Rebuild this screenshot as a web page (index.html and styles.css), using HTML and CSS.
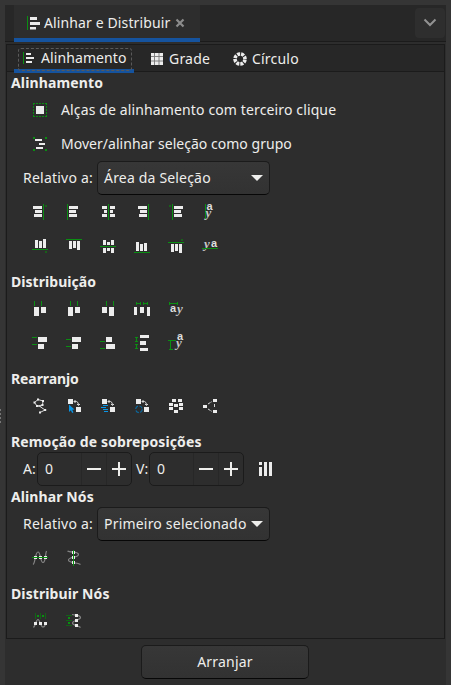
FILE: index.html
```html
<!DOCTYPE html>
<html lang="pt-BR">
<head>
<meta charset="utf-8">
<title>Alinhar e Distribuir</title>
<link rel="stylesheet" href="styles.css">
</head>
<body>
<div class="dock">
  <div class="grip"><i></i><i></i><i></i><i></i></div>
  <header class="dock-tabs">
    <div class="dock-tab">
      <svg class="tab-icon" width="14" height="14" viewBox="0 0 14 14"><path class="g" d="M0 0h1v14H0z"/><path class="w" d="M3 1h7v3H3zM3 6h10v3H3zM3 11h6v2.500H3z"/></svg>
      <span class="t-title">Alinhar e Distribuir</span>
      <svg class="close" width="10" height="10" viewBox="0 0 10 10"><path d="M1.500 1.500l7 7M8.500 1.500l-7 7"/></svg>
    </div>
    <button class="menu"><svg width="14" height="10" viewBox="0 0 14 10"><path d="M1.500 1.500L7 7l5.500-5.500"/></svg></button>
  </header>
  <main class="frame">
    <nav class="tabs">
      <div class="tab active">
        <svg width="12" height="12" viewBox="0 0 12 12"><path class="g" d="M0 0h1v12H0z"/><path class="w" d="M3 1h5v2H3zM3 5h8v2H3zM3 9h6v2H3z"/></svg>
        <span class="t-al">Alinhamento</span>
      </div>
      <div class="tab grade">
        <svg width="12" height="12" viewBox="0 0 12 12"><path class="w" d="M0 0h12v12H0z"/><path d="M3.500 0v12M8 0v12M0 3.500h12M0 8h12" stroke="#777" stroke-width=".9"/></svg>
        <span class="t-gr">Grade</span>
      </div>
      <div class="tab circ">
        <svg width="14" height="14" viewBox="0 0 14 14"><circle cx="7" cy="7" r="5" fill="none" stroke="#ececec" stroke-width="3.600" stroke-dasharray="2.930 1" stroke-dashoffset="-.5"/></svg>
        <span class="t-ci">Círculo</span>
      </div>
    </nav>
    <section>
      <h2 class="h-al">Alinhamento</h2>
      <div class="check"><svg width="20" height="20"><path class="w" d="M6 6h8v8H6z"/><path d="M3 3.500h14M3 16.500h14M3.500 3v14M16.500 3v14" class="gl" stroke-dasharray="2 1"/></svg><span class="t-c1">Alças de alinhamento com terceiro clique</span></div>
      <div class="check second"><svg width="20" height="20"><path class="w" d="M5 5h7v2H5zM9 9h6v2H9zM6 13h7v2H6z"/><path class="g" d="M3 3h2v2H3zM15 3h2v2h-2zM3 15h2v2H3zM15 15h2v2h-2z"/></svg><span class="t-c2">Mover/alinhar seleção como grupo</span></div>
      <div class="field"><label class="t-rel">Relativo a:</label><div class="combo"><span class="t-area">Área da Seleção</span><b></b></div></div>
      <div class="icons">
        <svg><path class="w" d="M3 4h9v3H3zM5 8h7v3H5zM4 12h8v3H4z"/><path class="g" d="M13 2h1v16h-1z"/><path class="d" d="M15 3h2v2h-2z"/></svg>
        <svg><path class="g" d="M3 2h1v16H3z"/><path class="w" d="M5 4h9v3H5zM5 8h7v3H5zM5 12h8v3H5z"/></svg>
        <svg><path class="w" d="M4 4h5v3H4zM12 4h5v3h-5zM6 8h3v3H6zM12 8h3v3h-3zM4 12h5v3H4zM12 12h5v3h-5z"/><path class="g" d="M10 2h1v16h-1z"/></svg>
        <svg><path class="w" d="M6 4h9v3H6zM8 8h7v3H8zM7 12h8v3H7z"/><path class="g" d="M16 2h1v16h-1z"/></svg>
        <svg><path class="d" d="M3 3h2v2H3z"/><path class="g" d="M6 2h1v16H6z"/><path class="w" d="M8 4h9v3H8zM8 8h7v3H8zM8 12h8v3H8z"/></svg>
        <svg><path class="g" d="M5 2h1v16H5z"/><text x="6.500" y="8" class="ga">a</text><text x="5.500" y="15" class="gy">y</text></svg>
      </div>
      <div class="icons">
        <svg><path class="w" d="M5 4h3v8H5zM9 5h3v7H9zM13 3h3v9h-3z"/><path class="g" d="M2 13h16v1H2z"/><path class="d" d="M15 15h2v2h-2z"/></svg>
        <svg><path class="g" d="M2 3h16v1H2z"/><path class="w" d="M5 5h3v8H5zM9 5h3v7H9zM13 5h3v9h-3z"/></svg>
        <svg><path class="w" d="M5 4h3v5H5zM9 6h3v3H9zM13 4h3v5h-3zM5 12h3v5H5zM9 12h3v3H9zM13 12h3v5h-3z"/><path class="g" d="M2 10h16v1H2z"/></svg>
        <svg><path class="w" d="M4 6h3v9H4zM8 8h3v7H8zM12 7h3v8h-3z"/><path class="g" d="M2 16h16v1H2z"/></svg>
        <svg><path class="d" d="M15 3h2v2h-2z"/><path class="g" d="M2 6h16v1H2z"/><path class="w" d="M5 8h3v8H5zM9 8h3v7H9zM13 8h3v9h-3z"/></svg>
        <svg><text x="4" y="11.500" class="gy">y</text><text x="11" y="11" class="ga">a</text><path class="g" d="M2 12h16v1H2z"/></svg>
      </div>
      <h2 class="gap h-di">Distribuição</h2>
      <div class="icons">
        <svg><path class="g" d="M4 1h1v5H4zM11 1h1v5h-1z"/><path class="w" d="M4 7h5v9H4zM11 7h5v6h-5z"/></svg>
        <svg><path class="g" d="M6 1h1v5H6zM13 1h1v5h-1z"/><path class="w" d="M4 7h5v9H4zM11 7h5v6h-5z"/></svg>
        <svg><path class="g" d="M8 1h1v5H8zM15 1h1v5h-1z"/><path class="w" d="M4 7h5v6H4zM11 7h5v9h-5z"/></svg>
        <svg><path class="gl" d="M4.500 2v3M4 3.500h5M8.500 2v3M11.500 2v3M11 3.500h5M15.500 2v3"/><path class="w" d="M2 7h3v8H2zM8 7h4v6H8zM15 7h3v9h-3z"/></svg>
        <svg><path class="gl" d="M3.500 2v3M3 3.500h9M11.500 2v3"/><text x="4" y="12" class="ga">a</text><text x="11" y="13" class="gy">y</text></svg>
      </div>
      <div class="icons tight">
        <svg><path class="g" d="M2 4h5v1H2zM2 11h5v1H2z"/><path class="w" d="M8 4h9v5H8zM8 11h6v5H8z"/></svg>
        <svg><path class="g" d="M2 6h5v1H2zM2 13h5v1H2z"/><path class="w" d="M8 4h9v5H8zM8 11h6v5H8z"/></svg>
        <svg><path class="g" d="M2 8h5v1H2zM2 15h5v1H2z"/><path class="w" d="M8 4h6v5H8zM8 11h9v5H8z"/></svg>
        <svg><path class="gl" d="M3 4.500h3M4.500 4v5M3 8.500h3M3 11.500h3M4.500 11v5M3 15.500h3"/><path class="w" d="M8 2h9v3H8zM8 8h6v4H8zM8 15h8v3H8z"/></svg>
        <svg><path class="gl" d="M2 7.500h8M4.500 7v9M3 16.500h4"/><text x="11" y="7" class="ga">a</text><text x="10" y="14" class="gy">y</text></svg>
      </div>
      <h2 class="gap h-re">Rearranjo</h2>
      <div class="icons tight">
        <svg><path class="wl" d="M4.500 6.500L8 3.500L13 5L12.500 9L7 10Z M7 10L10 10.500M12.500 9L10 10.500L15 14L10 16.500"/><path class="w" d="M3.500 5.500h2v2h-2zM7 2.500h2v2H7zM12 4h2v2h-2zM11.500 8h2v2h-2zM6 9h2v2H6zM14 13h2.200v2H14zM9 15.500h2v2H9z"/></svg>
        <svg><path class="w" d="M4 3h5v5H4zM12 11h5v5h-5z"/><path class="wl" d="M10 5.500h2.500q2 .5 2 3.500M11.500 4L10 5.500l1.500 1.500M13 8l1.500 1.500L16 8"/><path class="b" d="M5 8.500l5.500 5-2.300.2 1.300 2.600-1.400.6-1.200-2.600L5 16z"/></svg>
        <svg><path class="w" d="M4 3h5v5H4zM12 11h5v5h-5z"/><path class="wl" d="M10 5.500h2.500q2 .5 2 3.500M11.500 4L10 5.500l1.500 1.500M13 8l1.500 1.500L16 8"/><path class="b" d="M5 9h5v1H5zM3 11h5v1H3zM5 13h5v1H5zM6 15h4v1H6z"/></svg>
        <svg><path class="w" d="M4 3h5v5H4zM12 11h5v5h-5z"/><path class="wl" d="M10 5.500h2.500q2 .5 2 3.500M11.500 4L10 5.500l1.500 1.500M13 8l1.500 1.500L16 8"/><circle cx="7" cy="13.300" r="3.300" fill="none" stroke="#0a6ba3" stroke-width="1.200" stroke-dasharray="3.700 1.500"/></svg>
        <svg><path class="w" d="M6 3h4v3H6zM12 3h4v3h-4zM3 7h4v3H3zM8 8h4v3H8zM13 7h4v3h-4zM3 11h4v3H3zM13 11h4v3h-4zM8 14h4v3H8z"/></svg>
        <svg><path class="w" d="M3 9h4v3H3zM13 3h4v3h-4zM13 14h4v3h-4z"/><path class="wl" d="M8 8l4-2.500M8 13l4 2.500M14.500 8v4" stroke-dasharray="3 1"/></svg>
      </div>
      <h2 class="gap h-rm">Remoção de sobreposições</h2>
      <div class="field spins">
        <label class="t-a">A:</label><div class="spin"><span>0</span><i class="minus"></i><i class="plus"></i></div>
        <label class="t-v">V:</label><div class="spin"><span>0</span><i class="minus"></i><i class="plus"></i></div>
        <svg class="ill" width="14" height="14"><path class="w" d="M0 0h3v3H0zM0 5h3v9H0zM5 0h3v14H5zM10 0h3v14h-3z"/></svg>
      </div>
      <h2 class="h-an">Alinhar Nós</h2>
      <div class="field nodes"><label class="t-rel">Relativo a:</label><div class="combo"><span class="t-prim">Primeiro selecionado</span><b></b></div></div>
      <div class="icons">
        <svg><path class="s" d="M3 16.500C5.500 15 5 4 8 4S10 14.500 13 14.500S15 6 16.500 3"/><path class="w" d="M4 8h3v3H4zM9 8h3v3H9zM14 8h3v3h-3z"/><path class="g" d="M2 9h16v1H2z"/></svg>
        <svg><path class="s" d="M3.500 3C6 5 14.500 3 14.500 6.500S4.500 8.500 4.500 12S13 14 16.500 16.500"/><path class="w" d="M8 3h3v3H8zM8 8h3v3H8zM8 13h3v3H8z"/><path class="g" d="M9 2h1v16H9z"/></svg>
      </div>
      <h2 class="gap h-dn">Distribuir Nós</h2>
      <div class="icons tight">
        <svg><path class="dl" d="M5.500 2v6M10.500 2v6M15.500 2v6"/><path class="g" d="M7 4h2v2H7zM12 4h2v2h-2z"/><path class="s" d="M3.500 16.500C6 14 6 8.500 8 8.500S10.500 16 13 16S15 13 16 11"/><path class="w" d="M4 11h3v3H4zM9 11h3v3H9zM14 11h3v3h-3z"/></svg>
        <svg><path class="dl" d="M2 4.500h6M2 9.500h6M2 14.500h6"/><path class="g" d="M4 6h2v2H4zM4 11h2v2H4z"/><path class="s" d="M8 3.500C11 4.500 16.500 3.500 16.500 6.500S8.500 9 8.500 12S14 14 16.500 16.500"/><path class="w" d="M11 3h3v3h-3zM11 8h3v3h-3zM11 13h3v3h-3z"/></svg>
      </div>
    </section>
  </main>
  <footer><button class="apply"><span class="t-ar">Arranjar</span></button></footer>
</div>
</body>
</html>
```
FILE: styles.css
```css
* { box-sizing: border-box; }
body { margin: 0; height: 685px; overflow: hidden; background: #353535; color: #eeeeec; font: 14px/20px "Noto Sans", "Open Sans", sans-serif; }
svg { display: block; flex: none; overflow: visible; }
span, label, h2 { white-space: nowrap; }
button { font: inherit; color: inherit; padding: 0; }
.w { fill: #ececec; }
.g { fill: #0a8f12; }
.d { fill: #176219; }
.b { fill: #0a96e6; }
.gl, .wl, .s, .dl { fill: none; stroke: #0a8f12; stroke-width: 1; }
.wl { stroke: #d8d8d8; }
.s { stroke: #858585; stroke-width: 1.2; }
.dl { stroke: #126316; }
.ga { font: bold 11px/1 "Liberation Sans", sans-serif; fill: #dedede; }
.gy { font: italic bold 13px/1 "Liberation Serif", serif; fill: #c8c8c8; }

.dock { position: relative; margin: 5px 5px 0; height: 680px; background: #2d2d2d; display: flex; flex-direction: column; }
.grip { position: absolute; left: -6px; top: 404px; display: grid; gap: 2px; }
.grip i { width: 2px; height: 2px; background: #777; }
.dock-tabs { height: 37px; background: #272727; border-bottom: 1px solid #1b1b1b; padding-left: 9px; display: flex; justify-content: space-between; }
.dock-tab { width: 186px; height: 37px; background: #2d2d2d; border-bottom: 4px solid #15539e; display: flex; align-items: center; padding: 2px 0 0 13px; }
.dock-tab .t-title { margin-left: 3px; width: 127px; letter-spacing: .12px; }
.close { margin-left: 4px; }
.close path { fill: none; stroke: #8c8c8c; stroke-width: 2.2; }
.menu { width: 30px; height: 30px; margin: 3px 1px 0 0; border: 0; border-radius: 4px; background: #2e2e2e; display: grid; place-items: center; }
.menu path { fill: none; stroke: #929292; stroke-width: 2; }
.frame { margin: 2px 1px 0 1px; height: 595px; border: 1px solid #1b1b1b; }
.tabs { height: 27px; background: #272727; border-bottom: 1px solid #1b1b1b; display: flex; padding-left: 7px; }
.tab { height: 26px; display: flex; align-items: center; padding-top: 1px; }
.tab.active { position: relative; width: 120px; height: 28px; border-bottom: 4px solid #15539e; padding: 2px 0 0 9px; }
.tab.active::before { content: ""; position: absolute; left: 4px; top: 3px; width: 112px; height: 21px; border: 1px dashed #5a5a5a; border-radius: 3px; }
.tab.active span { margin-left: 6px; letter-spacing: .1px; }
.tab.grade { margin-left: 17px; width: 82px; }
.tab.grade span { margin-left: 6px; letter-spacing: .2px; }
.tab.circ span { margin-left: 5px; letter-spacing: .2px; }
h2 { margin: 0; padding-left: 4px; height: 22px; font-size: 14px; line-height: 22px; font-weight: 700; }
h2.gap { margin-top: 8px; }
.h-al { letter-spacing: .15px; }
.h-di { letter-spacing: .05px; }
.h-re { letter-spacing: -.1px; }
.h-rm { letter-spacing: .11px; }
.h-an, .h-dn { letter-spacing: .1px; }
.check { height: 32px; padding-left: 23px; display: flex; align-items: center; }
.check.second { margin-top: 2px; }
.check span { margin-left: 11px; }
.t-c1 { letter-spacing: .13px; }
.t-c2 { letter-spacing: .03px; }
.field { height: 34px; margin-top: 1px; padding-left: 16px; display: flex; align-items: center; }
.field.nodes { margin-top: -1px; }
.field .t-rel { width: 74px; letter-spacing: .22px; }
.combo { width: 173px; height: 34px; border: 1px solid #1b1b1b; border-bottom-color: #070707; border-radius: 5px; background: linear-gradient(#373737, #323232); display: flex; align-items: center; justify-content: space-between; padding: 0 6px; }
.combo b { border: 6px solid transparent; border-top-color: #eeeeec; border-bottom: 0; }
.t-area { letter-spacing: .18px; }
.t-prim { letter-spacing: .2px; }
.icons { height: 34px; padding-left: 23px; display: flex; align-items: center; gap: 14px; }
.icons svg { width: 20px; height: 20px; }
.icons.tight { margin-top: -1px; }
.field.spins { margin-top: -1px; }
.spins label { width: 14px; }
.spins .t-v { margin-left: 4px; width: 13px; }
.spin { width: 95px; height: 34px; border: 1px solid #1b1b1b; border-radius: 5px; display: grid; grid-template-columns: 43px 25px 25px; align-items: center; }
.spin span { padding-left: 7px; }
.spin i { height: 32px; border-left: 1px solid #272727; background: linear-gradient(#eeeeec, #eeeeec) center / 14px 2px no-repeat; }
.spin .plus { background: linear-gradient(#eeeeec, #eeeeec) center / 14px 2px no-repeat, linear-gradient(#eeeeec, #eeeeec) center / 2px 14px no-repeat; }
.ill { margin-left: 15px; }
footer { padding-left: 136px; margin-top: 6px; }
.apply { width: 168px; height: 34px; border: 1px solid #1b1b1b; border-bottom-color: #070707; border-radius: 5px; background: linear-gradient(#373737, #323232); letter-spacing: .2px; }
```
